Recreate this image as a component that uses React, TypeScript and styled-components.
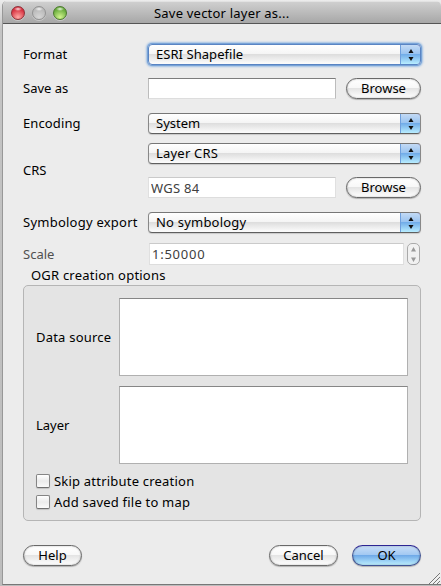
import React from "react";
import styled, { createGlobalStyle, css } from "styled-components";

const GlobalStyle = createGlobalStyle`
  * { box-sizing: border-box; }
  html, body, #root { height: 100%; margin: 0; }
  body { overflow: hidden; background: #b9b9b9; }
  button, input, textarea { font: inherit; color: inherit; }
`;

const Desktop = styled.div`
  height: 586px;
  width: 441px;
  padding: 1px 0 1px 2px;
  background: linear-gradient(#ececec, #c4c4c4 30px, #bdbdbd);
  font: 13px/16px "Noto Sans", "Open Sans", sans-serif;
  color: #000;
`;

const Window = styled.main`
  position: relative;
  display: flex;
  flex-direction: column;
  height: 584px;
  border-left: 1px solid #989898;
  border-bottom: 1px solid #777;
  border-radius: 5px 5px 0 0;
  background: #ececec;
  overflow: hidden;
`;

const TitleBar = styled.header`
  display: flex;
  align-items: center;
  flex: none;
  height: 23px;
  padding-left: 8px;
  border-top: 1px solid #e2e2e2;
  border-bottom: 1px solid #555;
  background: linear-gradient(#cfcfcf, #a7a7a7);
`;

const Light = styled.span<{ $edge: string; $mid: string; $glow: string }>`
  width: 14px;
  height: 14px;
  margin: 1px 7px 0 0;
  border-radius: 50%;
  border: 1px solid ${(p) => p.$edge};
  background:
    radial-gradient(ellipse 4px 2px at 50% 2px, rgba(255, 255, 255, 0.85), transparent),
    radial-gradient(circle at 50% 85%, ${(p) => p.$glow}, ${(p) => p.$mid} 70%);
  box-shadow: 0 1px 0 rgba(255, 255, 255, 0.35);
`;

const Label = styled.span<{ $ls?: number; $dim?: boolean }>`
  white-space: nowrap;
  letter-spacing: ${(p) => p.$ls ?? 0.21}px;
  color: ${(p) => (p.$dim ? "#505050" : "#000")};
`;

const Title = styled(Label)`
  margin-left: 80px;
`;

const FieldLabel = styled(Label)`
  padding-bottom: 2px;
`;

const Form = styled.div`
  display: flex;
  flex-direction: column;
  padding: 20px 20px 0;
`;

const Row = styled.div<{ $top?: number }>`
  display: grid;
  grid-template-columns: 125px 273px;
  align-items: center;
  margin-top: ${(p) => p.$top ?? 0}px;
`;

const Stack = styled.div<{ $gap: number }>`
  display: flex;
  flex-direction: column;
  gap: ${(p) => p.$gap}px;
`;

const Inline = styled.div<{ $gap: number }>`
  display: flex;
  align-items: center;
  gap: ${(p) => p.$gap}px;
`;

const SelectBox = styled.div<{ $focus?: boolean }>`
  display: flex;
  justify-content: space-between;
  align-items: stretch;
  height: 21px;
  padding-left: 7px;
  border: 1px solid #777;
  border-color: #777 #888 #5f5f5f;
  border-radius: 4px;
  overflow: hidden;
  background: linear-gradient(#fff, #f5f5f5 45%, #dedede 50%, #fafafa 95%);
  box-shadow: 0 1px 1px rgba(0, 0, 0, 0.15);
  line-height: 19px;
  ${(p) =>
    p.$focus &&
    css`
      border-color: #5984c3;
      box-shadow: 0 0 0 1px #78a3d7, 0 0 2px 2px #9fbfe4;
    `}
`;

const Arrows = styled.span`
  display: grid;
  place-items: center;
  width: 21px;
  margin: -1px -1px 0 0;
  border-top: 1px solid #2d2593;
  border-right: 1px solid #4a54b0;
  border-left: 1px solid #6e9fdd;
  border-radius: 0 4px 4px 0;
  background: linear-gradient(#c3daf5, #9bc4f0 45%, #72ade9 50%, #b8edff);
`;

const Input = styled.input<{ $soft?: boolean }>`
  width: 188px;
  height: 21px;
  padding: 0 0 0 2px;
  border: 1px solid ${(p) => (p.$soft ? "#e0e0e0" : "#bcbcbc")};
  border-top-color: ${(p) => (p.$soft ? "#cacaca" : "#7c7c7c")};
  border-bottom-color: #ddd;
  border-radius: 0;
  outline: none;
  background: #fff;
  color: #404040;
`;

const CrsInput = styled(Input)`
  letter-spacing: 0.25px;
`;

const ScaleInput = styled(Input)`
  width: 255px;
  height: 22px;
  margin-left: 1px;
  letter-spacing: 0.75px;
`;

const Button = styled.button<{ $w: number; $primary?: boolean }>`
  width: ${(p) => p.$w}px;
  height: 21px;
  padding: 0 0 1px;
  border: 1px solid ${(p) => (p.$primary ? "#405393" : "#686868")};
  border-top-color: ${(p) => (p.$primary ? "#2d2593" : "#686868")};
  border-radius: 11px;
  line-height: 18px;
  color: #000;
  background: ${(p) =>
    p.$primary
      ? "linear-gradient(#c9def7, #a3c9f2 45%, #70aae8 50%, #bdefff)"
      : "linear-gradient(#fff, #f8f8f8 45%, #e4e4e4 50%, #fff)"};
  box-shadow: 0 1px 1px rgba(0, 0, 0, 0.25), inset 0 0 2px rgba(0, 0, 0, 0.3);
`;

const Stepper = styled.span`
  display: grid;
  place-items: center;
  width: 13px;
  height: 22px;
  border: 1px solid #aaa;
  border-radius: 5px;
  background: #f1f1f1;
`;

const GroupTitle = styled.div`
  height: 16px;
  margin: 2px 0 0 8px;
`;

const Group = styled.section`
  height: 236px;
  margin-top: 2px;
  padding: 12px;
  border: 1px solid #b5b5b5;
  border-radius: 5px;
  background: #e4e4e4;
`;

const OptionRow = styled.div`
  display: grid;
  grid-template-columns: 83px 289px;
  align-items: center;
  margin-bottom: 10px;
`;

const TextArea = styled.textarea`
  display: block;
  height: 78px;
  border: 1px solid #b0b0b0;
  border-top-color: #868686;
  border-radius: 0;
  resize: none;
  outline: none;
  background: #fff;
`;

const Check = styled.label`
  display: flex;
  align-items: center;
  gap: 4px;
  height: 21px;
  margin-top: -4px;
  & + & { margin-top: 0; }
`;

const Box = styled.span`
  width: 14px;
  height: 14px;
  border: 1px solid #858585;
  border-bottom-color: #707070;
  border-radius: 2px;
  background: linear-gradient(#fff, #ebebeb 50%, #fafafa);
  box-shadow: 0 1px 1px rgba(0, 0, 0, 0.15);
`;

const Footer = styled.footer`
  display: flex;
  gap: 14px;
  margin-top: 24px;
`;

const Spacer = styled.span`
  flex: 1;
`;

const Grip = styled.svg`
  position: absolute;
  right: 1px;
  bottom: 0;
`;

const Select = ({ text, ls, focus }: { text: string; ls?: number; focus?: boolean }) => (
  <SelectBox $focus={focus}>
    <Label $ls={ls}>{text}</Label>
    <Arrows>
      <svg width="6" height="12" viewBox="0 0 6 12">
        <path d="M3 0 5.5 4H.5ZM3 12 5.5 8H.5Z" fill="#101010" />
      </svg>
    </Arrows>
  </SelectBox>
);

export default function App() {
  return (
    <Desktop>
      <GlobalStyle />
      <Window>
        <TitleBar>
          <Light $edge="#8f3038" $mid="#d62f3e" $glow="#ffa9a5" />
          <Light $edge="#929292" $mid="#b9b9b9" $glow="#d6d6d6" />
          <Light $edge="#4b792d" $mid="#68ab3c" $glow="#d3f58e" />
          <Title>Save vector layer as...</Title>
        </TitleBar>
        <Form>
          <Row>
            <FieldLabel $ls={0}>Format</FieldLabel>
            <Select text="ESRI Shapefile" ls={0.05} focus />
          </Row>
          <Row $top={13}>
            <FieldLabel $ls={0}>Save as</FieldLabel>
            <Inline $gap={10}>
              <Input />
              <Button $w={75}>Browse</Button>
            </Inline>
          </Row>
          <Row $top={14}>
            <FieldLabel $ls={0.12}>Encoding</FieldLabel>
            <Select text="System" ls={0} />
          </Row>
          <Row $top={9}>
            <FieldLabel $ls={0}>CRS</FieldLabel>
            <Stack $gap={13}>
              <Select text="Layer CRS" />
              <Inline $gap={10}>
                <CrsInput $soft defaultValue="WGS 84" />
                <Button $w={75}>Browse</Button>
              </Inline>
            </Stack>
          </Row>
          <Row $top={14}>
            <FieldLabel $ls={0.24}>Symbology export</FieldLabel>
            <Select text="No symbology" />
          </Row>
          <Row $top={10}>
            <Label $ls={0} $dim>Scale</Label>
            <Inline $gap={3}>
              <ScaleInput $soft defaultValue="1:50000" />
              <Stepper>
                <svg width="7" height="15" viewBox="0 0 7 15">
                  <path d="M3.5 0 6 4.5H1ZM3.5 15 6 10.5H1Z" fill="#999" />
                </svg>
              </Stepper>
            </Inline>
          </Row>
          <GroupTitle>
            <Label>OGR creation options</Label>
          </GroupTitle>
          <Group>
            <OptionRow>
              <Label>Data source</Label>
              <TextArea />
            </OptionRow>
            <OptionRow>
              <Label $ls={0}>Layer</Label>
              <TextArea />
            </OptionRow>
            <Check>
              <Box />
              <Label>Skip attribute creation</Label>
            </Check>
            <Check>
              <Box />
              <Label>Add saved file to map</Label>
            </Check>
          </Group>
          <Footer>
            <Button $w={59}>Help</Button>
            <Spacer />
            <Button $w={69}>Cancel</Button>
            <Button $w={69} $primary>OK</Button>
          </Footer>
        </Form>
        <Grip width="11" height="11" viewBox="0 0 11 11">
          <path d="M0 11 11 0M4 11 11 4M8 11 11 8" stroke="#777" fill="none" />
          <path d="M1 11.5 11.5 1M5 11.5 11.5 5" stroke="#fff" strokeWidth=".5" fill="none" />
        </Grip>
      </Window>
    </Desktop>
  );
}
